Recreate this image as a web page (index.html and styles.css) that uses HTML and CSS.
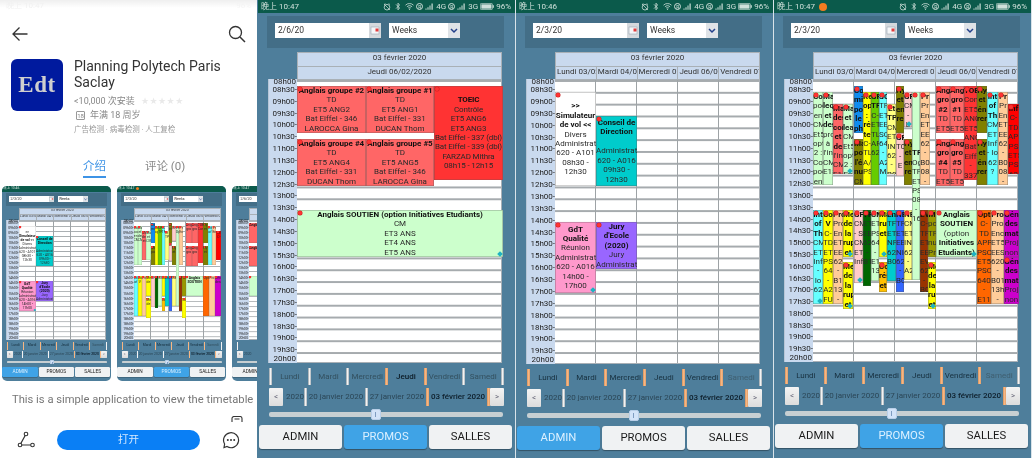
FILE: index.html
```html
<!DOCTYPE html>
<html lang="fr">
<head>
<meta charset="utf-8">
<title>Planning Polytech Paris Saclay</title>
<link rel="stylesheet" href="styles.css">
</head>
<body>
<svg class="defs" aria-hidden="true">
<symbol id="i-alarm" viewBox="0 0 8 8"><circle cx="4" cy="4.2" r="2.8" fill="none" stroke="currentColor" stroke-width=".8"/><path d="M1 1 7 7M1 1.6 2.4.6M5.6.6 7 1.6" stroke="currentColor" stroke-width=".7"/></symbol>
<symbol id="i-bt" viewBox="0 0 6 9"><path d="M1 2.4 4.6 6 3 7.8V1.2L4.6 3 1 6.6" fill="none" stroke="currentColor" stroke-width=".8"/></symbol>
<symbol id="i-wifi" viewBox="0 0 9 7"><path d="M.5 2.2a5.6 5.6 0 0 1 8 0M1.9 3.7a3.7 3.7 0 0 1 5.2 0M3.2 5a1.8 1.8 0 0 1 2.6 0" fill="none" stroke="currentColor" stroke-width=".8"/><circle cx="4.5" cy="6.2" r=".6" fill="currentColor"/></symbol>
<symbol id="i-sig" viewBox="0 0 9 7"><path d="M.5 5.6h1v1.2h-1zM2.5 4.2h1v2.6h-1zM4.5 2.6h1v4.2h-1zM6.500 .6h1.200v6.200H6.500z" fill="currentColor"/></symbol>
<symbol id="i-bat" viewBox="0 0 14 7"><rect x=".4" y=".4" width="12" height="6.200" rx="1" fill="none" stroke="currentColor" stroke-width=".7"/><rect x="1.300" y="1.300" width="10.200" height="4.400" fill="currentColor"/><rect x="12.800" y="2.200" width="1" height="2.600" fill="currentColor"/></symbol>
<symbol id="i-cal" viewBox="0 0 12 15"><rect width="12" height="15" fill="#d5d9dd"/><rect x="2" y="4" width="8" height="7" fill="#f4f6f8" stroke="#9aa7b2" stroke-width=".6"/><rect x="6.500" y="5.500" width="3" height="3" fill="#e23b3b"/></symbol>
<symbol id="i-chev" viewBox="0 0 12 15"><path d="M3 6 6 9 9 6" fill="none" stroke="#23408a" stroke-width="1.500"/></symbol>
</svg>

<main class="shot">

<section class="store">
  <div class="store-status"><span>晚上 10:47</span><span class="store-status-r">96%</span></div>
  <nav class="store-nav">
    <svg class="nav-ic" viewBox="0 0 18 18"><path d="M16.500 9H2M8.500 2.500 2 9l6.500 6.500" fill="none" stroke="#333" stroke-width="1.300"/></svg>
    <svg class="nav-ic" viewBox="0 0 18 18"><circle cx="7.500" cy="7.500" r="6" fill="none" stroke="#333" stroke-width="1.300"/><path d="M12 12l5 5" stroke="#333" stroke-width="1.500"/></svg>
  </nav>
  <div class="app">
    <div class="app-logo">Edt</div>
    <div class="app-info">
      <h1 class="app-name">Planning Polytech Paris Saclay</h1>
      <p class="app-meta">&lt;10,000 次安装<span class="stars">★★★★★</span></p>
      <p class="app-meta"><span class="age">18</span>年满 18 周岁</p>
      <p class="app-checks">广告检测 · 病毒检测 · 人工复检</p>
    </div>
  </div>
  <div class="store-tabs"><span class="store-tab on">介绍</span><span class="store-tab">评论 (0)</span></div>
  <div class="thumbs">
    <div class="thumb">
      <div class="phone mini">
        <div class="status"><span class="clock">晚上 10:46</span></div>
        <div class="toolbar"><div class="date"><span class="date-t">2/3/20</span><svg class="cal-ic"><use href="#i-cal"/></svg></div><div class="select"><span class="date-t">Weeks</span><svg class="cal-ic"><use href="#i-chev"/></svg></div></div>
        <div class="planner">
          <div class="times"><span>08h00</span><span>08h30-</span><span>09h00-</span><span>09h30-</span><span>10h00-</span><span>10h30-</span><span>11h00-</span><span>11h30-</span><span>12h00-</span><span>12h30-</span><span>13h00-</span><span>13h30-</span><span>14h00-</span><span>14h30-</span><span>15h00-</span><span>15h30-</span><span>16h00-</span><span>16h30-</span><span>17h00-</span><span>17h30-</span><span>18h00-</span><span>18h30-</span><span>19h00-</span><span>19h30-</span><span>20h00</span></div>
          <div class="cal">
            <div class="head">03 février 2020</div>
            <div class="head days"><span>Lundi 03/02</span><span>Mardi 04/02</span><span>Mercredi 05/02</span><span>Jeudi 06/02</span><span>Vendredi 07/02</span></div>
            <div class="grid five"><i></i><i></i><i></i><i></i><i></i>
              <div class="ev mid white" style="left:0;top:12px;width:41px;height:94px"><p><b>&gt;&gt; Simulateur de vol &lt;&lt;</b> Divers Administrati 620 - A101 08h30 - 12h30</p></div>
              <div class="ev mid teal" style="left:41px;top:36px;width:41px;height:70px"><p><b>Conseil de Direction</b><br><br>Administrati 620 - A016 09h30 - 12h30</p></div>
              <div class="ev mid pink mk" style="left:0;top:142px;width:41px;height:71px"><p><b>GdT Qualité</b> Réunion Administrati 620 - A016 14h00 - 17h00</p></div>
              <div class="ev purple" style="left:41px;top:142px;width:41px;height:47px"><b>Jury d'Ecole (2020)</b> Jury Administrati</div>
            </div>
          </div>
        </div>
        <div class="daybar"><i class="sep or"></i><span class="dy">Lundi</span><i class="sep or"></i><span class="dy">Mardi</span><i class="sep or"></i><span class="dy">Mercredi</span><i class="sep or"></i><span class="dy">Jeudi</span><i class="sep or"></i><span class="dy">Vendredi</span><i class="sep or"></i><span class="dy dim">Samedi</span><i class="sep"></i></div>
        <div class="weekbar"><span class="nb">&lt;</span><span class="wk first">2020</span><i class="sep"></i><span class="wk">20 janvier 2020</span><i class="sep"></i><span class="wk">27 janvier 2020</span><i class="sep or"></i><span class="wk cur">03 février 2020</span><i class="sep or"></i><span class="nb">&gt;</span></div>
        <div class="slider"><span class="knob"></span></div>
        <div class="tabs"><span class="tab on">ADMIN</span><span class="tab">PROMOS</span><span class="tab">SALLES</span></div>
      </div>
    </div>
    <div class="thumb">
      <div class="phone mini">
        <div class="status"><span class="clock">晚上 10:47</span><span class="rec"></span></div>
        <div class="toolbar"><div class="date"><span class="date-t">2/3/20</span><svg class="cal-ic"><use href="#i-cal"/></svg></div><div class="select"><span class="date-t">Weeks</span><svg class="cal-ic"><use href="#i-chev"/></svg></div></div>
        <div class="planner">
          <div class="times"><span>08h00</span><span>08h30-</span><span>09h00-</span><span>09h30-</span><span>10h00-</span><span>10h30-</span><span>11h00-</span><span>11h30-</span><span>12h00-</span><span>12h30-</span><span>13h00-</span><span>13h30-</span><span>14h00-</span><span>14h30-</span><span>15h00-</span><span>15h30-</span><span>16h00-</span><span>16h30-</span><span>17h00-</span><span>17h30-</span><span>18h00-</span><span>18h30-</span><span>19h00-</span><span>19h30-</span><span>20h00</span></div>
          <div class="cal">
            <div class="head">03 février 2020</div>
            <div class="head days"><span>Lundi 03/02</span><span>Mardi 04/02</span><span>Mercredi 05/02</span><span>Jeudi 06/02</span><span>Vendredi 07/02</span></div>
            <div class="grid five"><i></i><i></i><i></i><i></i><i></i>
              <div class="ev green" style="left:0;top:12px;width:10px;height:93px">Co pod en CM</div>
              <div class="ev green" style="left:10px;top:12px;width:10px;height:93px">Ma et des CM</div>
              <div class="ev rose" style="left:20px;top:24px;width:10px;height:70px">Ma des et</div>
              <div class="ev green" style="left:30px;top:24px;width:10px;height:70px">Ma et CM</div>
              <div class="ev blue" style="left:41px;top:6px;width:9px;height:47px">Co mi</div>
              <div class="ev olive" style="left:41px;top:59px;width:9px;height:46px">Ma po</div>
              <div class="ev yellow" style="left:50px;top:12px;width:8px;height:93px">Re op</div>
              <div class="ev lime" style="left:58px;top:12px;width:8px;height:93px">GF TF</div>
              <div class="ev aqua" style="left:66px;top:12px;width:8px;height:93px">SC TF</div>
              <div class="ev lemon" style="left:74px;top:24px;width:9px;height:70px">Et TP</div>
              <div class="ev olive" style="left:83px;top:6px;width:8px;height:47px">Hy et</div>
              <div class="ev blush" style="left:83px;top:53px;width:8px;height:43px">GF</div>
              <div class="ev blush" style="left:91px;top:12px;width:8px;height:35px">GF</div>
              <div class="ev olive" style="left:91px;top:59px;width:8px;height:46px">Hy et</div>
              <div class="ev green" style="left:99px;top:12px;width:8px;height:188px">TF Og</div>
              <div class="ev peach" style="left:107px;top:12px;width:10px;height:93px">Pr En</div>
              <div class="ev rose" style="left:123px;top:6px;width:14px;height:47px">Ang gro</div>
              <div class="ev rose" style="left:137px;top:6px;width:14px;height:47px">Ang gro</div>
              <div class="ev rose" style="left:123px;top:59px;width:14px;height:47px">Ang gro</div>
              <div class="ev rose" style="left:137px;top:59px;width:14px;height:47px">Ang gro</div>
              <div class="ev scarlet" style="left:151px;top:6px;width:13px;height:94px">TOE Con</div>
              <div class="ev olive" style="left:164px;top:6px;width:10px;height:47px">Hy et</div>
              <div class="ev olive" style="left:164px;top:59px;width:10px;height:46px">Hy et</div>
              <div class="ev aqua" style="left:174px;top:12px;width:11px;height:93px">Int of</div>
              <div class="ev peach" style="left:185px;top:12px;width:10px;height:93px">Pr En</div>
              <div class="ev red" style="left:195px;top:24px;width:11px;height:70px">Inf C-</div>
              <div class="ev aqua" style="left:0;top:130px;width:10px;height:94px">Int of</div>
              <div class="ev yellow" style="left:10px;top:130px;width:10px;height:94px">Co V</div>
              <div class="ev peach" style="left:20px;top:130px;width:10px;height:94px">Pro</div>
              <div class="ev yellow" style="left:30px;top:130px;width:10px;height:47px">Me de</div>
              <div class="ev yellow" style="left:30px;top:182px;width:10px;height:47px">Me de</div>
              <div class="ev blush" style="left:41px;top:130px;width:9px;height:73px">GF</div>
              <div class="ev forest" style="left:50px;top:130px;width:8px;height:76px">TF</div>
              <div class="ev green" style="left:58px;top:130px;width:8px;height:71px">CM</div>
              <div class="ev yellow" style="left:66px;top:130px;width:8px;height:47px">Ma</div>
              <div class="ev amber" style="left:66px;top:182px;width:8px;height:30px">Co</div>
              <div class="ev teal" style="left:74px;top:130px;width:9px;height:71px">En</div>
              <div class="ev royal" style="left:83px;top:130px;width:8px;height:82px">TF</div>
              <div class="ev lemon" style="left:91px;top:130px;width:8px;height:70px">NE</div>
              <div class="ev brown" style="left:107px;top:130px;width:8px;height:82px">EV</div>
              <div class="ev moss" style="left:115px;top:130px;width:8px;height:47px">M</div>
              <div class="ev yellow" style="left:115px;top:182px;width:8px;height:47px">Me</div>
              <div class="ev green" style="left:123px;top:130px;width:41px;height:47px"><b>Anglais SOUTIEN</b></div>
              <div class="ev orange" style="left:164px;top:130px;width:14px;height:94px">Opt</div>
              <div class="ev peach" style="left:178px;top:130px;width:13px;height:94px">Pro</div>
              <div class="ev magenta" style="left:191px;top:130px;width:15px;height:94px">Gén des</div>
            </div>
          </div>
        </div>
        <div class="daybar"><i class="sep or"></i><span class="dy">Lundi</span><i class="sep or"></i><span class="dy">Mardi</span><i class="sep or"></i><span class="dy">Mercredi</span><i class="sep or"></i><span class="dy">Jeudi</span><i class="sep or"></i><span class="dy">Vendredi</span><i class="sep or"></i><span class="dy dim">Samedi</span><i class="sep"></i></div>
        <div class="weekbar"><span class="nb">&lt;</span><span class="wk first">2020</span><i class="sep"></i><span class="wk">20 janvier 2020</span><i class="sep"></i><span class="wk">27 janvier 2020</span><i class="sep or"></i><span class="wk cur">03 février 2020</span><i class="sep or"></i><span class="nb">&gt;</span></div>
        <div class="slider"><span class="knob"></span></div>
        <div class="tabs"><span class="tab">ADMIN</span><span class="tab on">PROMOS</span><span class="tab">SALLES</span></div>
      </div>
    </div>
    <div class="thumb">
      <div class="phone mini">
        <div class="status"><span class="clock">晚上 10:47</span></div>
        <div class="toolbar"><div class="date"><span class="date-t">2/6/20</span><svg class="cal-ic"><use href="#i-cal"/></svg></div><div class="select"><span class="date-t">Weeks</span><svg class="cal-ic"><use href="#i-chev"/></svg></div></div>
        <div class="planner">
          <div class="times"><span>08h00</span><span>08h30-</span><span>09h00-</span><span>09h30-</span><span>10h00-</span><span>10h30-</span><span>11h00-</span><span>11h30-</span><span>12h00-</span><span>12h30-</span><span>13h00-</span><span>13h30-</span><span>14h00-</span><span>14h30-</span><span>15h00-</span><span>15h30-</span><span>16h00-</span><span>16h30-</span><span>17h00-</span><span>17h30-</span><span>18h00-</span><span>18h30-</span><span>19h00-</span><span>19h30-</span><span>20h00</span></div>
          <div class="cal">
            <div class="head">03 février 2020</div>
            <div class="head">Jeudi 06/02/2020</div>
            <div class="grid">
              <div class="ev rose" style="left:0;top:6px;width:69px;height:47px"><b>Anglais groupe #2</b></div>
              <div class="ev rose" style="left:0;top:59px;width:69px;height:47px"><b>Anglais groupe #4</b></div>
              <div class="ev green" style="left:0;top:130px;width:206px;height:47px"><b>Anglais SOUTIEN</b></div>
            </div>
          </div>
        </div>
        <div class="daybar"><i class="sep"></i><span class="dy dim">Lundi</span><i class="sep"></i></div>
        <div class="weekbar"><span class="nb">&lt;</span><span class="wk first">2020</span></div>
        <div class="slider"></div>
        <div class="tabs"><span class="tab">ADMIN</span><span class="tab on">PROMOS</span><span class="tab">SALLES</span></div>
      </div>
    </div>
  </div>
  <p class="desc">This is a simple application to view the timetable</p>
  <div class="peek"><svg class="peek-ic" viewBox="0 0 12 6"><path d="M1 6V2.500a2 2 0 0 1 2-2h6a2 2 0 0 1 2 2V6M3.500 3h5" fill="none" stroke="#333" stroke-width="1.100"/></svg></div>
  <div class="actions">
    <svg class="act-ic" viewBox="0 0 18 18"><path d="M9 3 3 14h13" fill="none" stroke="#333" stroke-width="1.200"/><circle cx="9" cy="3" r="1.800" fill="#fff" stroke="#333" stroke-width="1.100"/><circle cx="3" cy="14" r="1.800" fill="#fff" stroke="#333" stroke-width="1.100"/><circle cx="15.500" cy="14" r="1.800" fill="#fff" stroke="#333" stroke-width="1.100"/></svg>
    <span class="open">打开</span>
    <svg class="act-ic" viewBox="0 0 18 18"><path d="M5 15.500A7.500 7.500 0 1 0 2.600 13L2 16.500z" fill="none" stroke="#333" stroke-width="1.200"/><circle cx="5.800" cy="9" r="1" fill="#333"/><circle cx="9" cy="9" r="1" fill="#333"/><circle cx="12.200" cy="9" r="1" fill="#333"/></svg>
  </div>
</section>

<section class="phone first-phone">
  <div class="status"><span class="clock">晚上 10:47</span><span class="status-r"><svg class="s-a"><use href="#i-alarm"/></svg><svg class="s-b"><use href="#i-bt"/></svg><svg class="s-w"><use href="#i-wifi"/></svg><span class="r">R</span><svg class="s-w"><use href="#i-sig"/></svg><span>4G</span><span class="r">R</span><svg class="s-w"><use href="#i-sig"/></svg><span>3G</span><svg class="s-t"><use href="#i-bat"/></svg><span>96%</span></span></div>
  <div class="toolbar"><div class="date"><span class="date-t">2/6/20</span><svg class="cal-ic"><use href="#i-cal"/></svg></div><div class="select"><span class="date-t">Weeks</span><svg class="cal-ic"><use href="#i-chev"/></svg></div></div>
  <div class="planner">
    <div class="times"><span>08h00</span><span>08h30-</span><span>09h00-</span><span>09h30-</span><span>10h00-</span><span>10h30-</span><span>11h00-</span><span>11h30-</span><span>12h00-</span><span>12h30-</span><span>13h00-</span><span>13h30-</span><span>14h00-</span><span>14h30-</span><span>15h00-</span><span>15h30-</span><span>16h00-</span><span>16h30-</span><span>17h00-</span><span>17h30-</span><span>18h00-</span><span>18h30-</span><span>19h00-</span><span>19h30-</span><span>20h00</span></div>
    <div class="cal">
      <div class="head">03 février 2020</div>
      <div class="head">Jeudi 06/02/2020</div>
      <div class="grid">
        <div class="ev rose" style="left:0;top:6px;width:69px;height:47px"><b>Anglais groupe #2</b><br>TD<br>ET5 ANG2<br>Bat Eiffel - 346<br>LAROCCA Gina</div>
        <div class="ev rose" style="left:69px;top:6px;width:68px;height:47px"><b>Anglais groupe #1</b><br>TD<br>ET5 ANG1<br>Bat Eiffel - 331<br>DUCAN Thom</div>
        <div class="ev mid scarlet tight" style="left:137px;top:6px;width:69px;height:94px"><p><b>TOEIC</b><br>Contrôle<br>ET5 ANG6<br>ET5 ANG3<br>Bat Eiffel - 337 (dbl)<br>Bat Eiffel - 339 (dbl)<br>FARZAD Mithra<br>08h15 - 12h15</p></div>
        <div class="ev rose" style="left:0;top:59px;width:69px;height:47px"><b>Anglais groupe #4</b><br>TD<br>ET5 ANG4<br>Bat Eiffel - 331<br>DUCAN Thom</div>
        <div class="ev rose" style="left:69px;top:59px;width:68px;height:47px"><b>Anglais groupe #5</b><br>TD<br>ET5 ANG5<br>Bat Eiffel - 346<br>LAROCCA Gina</div>
        <div class="ev green mk" style="left:0;top:130px;width:206px;height:47px"><b>Anglais SOUTIEN (option Initiatives Etudiants)</b><br>CM<br>ET3 ANS<br>ET4 ANS<br>ET5 ANS</div>
      </div>
    </div>
  </div>
  <div class="daybar"><i class="sep"></i><span class="dy dim">Lundi</span><i class="sep"></i><span class="dy dim">Mardi</span><i class="sep"></i><span class="dy dim">Mercredi</span><i class="sep or"></i><span class="dy cur">Jeudi</span><i class="sep or"></i><span class="dy dim">Vendredi</span><i class="sep"></i><span class="dy dim">Samedi</span><i class="sep"></i></div>
  <div class="weekbar"><span class="nb">&lt;</span><span class="wk first">2020</span><i class="sep"></i><span class="wk">20 janvier 2020</span><i class="sep"></i><span class="wk">27 janvier 2020</span><i class="sep or"></i><span class="wk cur">03 février 2020</span><i class="sep or"></i><span class="nb">&gt;</span></div>
  <div class="slider"><span class="knob"></span></div>
  <div class="tabs"><span class="tab">ADMIN</span><span class="tab on">PROMOS</span><span class="tab">SALLES</span></div>
</section>

<section class="phone tall">
  <div class="status"><span class="clock">晚上 10:46</span><span class="status-r"><svg class="s-a"><use href="#i-alarm"/></svg><svg class="s-b"><use href="#i-bt"/></svg><svg class="s-w"><use href="#i-wifi"/></svg><span class="r">R</span><svg class="s-w"><use href="#i-sig"/></svg><span>4G</span><span class="r">R</span><svg class="s-w"><use href="#i-sig"/></svg><span>3G</span><svg class="s-t"><use href="#i-bat"/></svg><span>96%</span></span></div>
  <div class="toolbar"><div class="date"><span class="date-t">2/3/20</span><svg class="cal-ic"><use href="#i-cal"/></svg></div><div class="select"><span class="date-t">Weeks</span><svg class="cal-ic"><use href="#i-chev"/></svg></div></div>
  <div class="planner">
    <div class="times"><span>08h00</span><span>08h30-</span><span>09h00-</span><span>09h30-</span><span>10h00-</span><span>10h30-</span><span>11h00-</span><span>11h30-</span><span>12h00-</span><span>12h30-</span><span>13h00-</span><span>13h30-</span><span>14h00-</span><span>14h30-</span><span>15h00-</span><span>15h30-</span><span>16h00-</span><span>16h30-</span><span>17h00-</span><span>17h30-</span><span>18h00-</span><span>18h30-</span><span>19h00-</span><span>19h30-</span><span>20h00</span></div>
    <div class="cal">
      <div class="head">03 février 2020</div>
      <div class="head days"><span>Lundi 03/02</span><span>Mardi 04/02</span><span>Mercredi 05/02</span><span>Jeudi 06/02</span><span>Vendredi 07/02</span></div>
      <div class="grid five"><i></i><i></i><i></i><i></i><i></i>
        <div class="ev mid white" style="left:0;top:12px;width:41px;height:94px"><p><b>&gt;&gt; Simulateur de vol &lt;&lt;</b> Divers Administrati 620 - A101 08h30 - 12h30</p></div>
        <div class="ev mid teal" style="left:41px;top:36px;width:41px;height:70px"><p><b>Conseil de Direction</b><br><br>Administrati 620 - A016 09h30 - 12h30</p></div>
        <div class="ev mid pink mk" style="left:0;top:142px;width:41px;height:71px"><p><b>GdT Qualité</b> Réunion Administrati 620 - A016 14h00 - 17h00</p></div>
        <div class="ev purple" style="left:41px;top:142px;width:41px;height:47px"><b>Jury d'Ecole (2020)</b> Jury Administrati</div>
      </div>
    </div>
  </div>
  <div class="daybar"><i class="sep or"></i><span class="dy">Lundi</span><i class="sep or"></i><span class="dy">Mardi</span><i class="sep or"></i><span class="dy">Mercredi</span><i class="sep or"></i><span class="dy">Jeudi</span><i class="sep or"></i><span class="dy">Vendredi</span><i class="sep or"></i><span class="dy dim">Samedi</span><i class="sep"></i></div>
  <div class="weekbar"><span class="nb">&lt;</span><span class="wk first">2020</span><i class="sep"></i><span class="wk">20 janvier 2020</span><i class="sep"></i><span class="wk">27 janvier 2020</span><i class="sep or"></i><span class="wk cur">03 février 2020</span><i class="sep or"></i><span class="nb">&gt;</span></div>
  <div class="slider"><span class="knob"></span></div>
  <div class="tabs"><span class="tab on">ADMIN</span><span class="tab">PROMOS</span><span class="tab">SALLES</span></div>
</section>

<section class="phone short">
  <div class="status"><span class="clock">晚上 10:47</span><span class="rec"></span><span class="status-r"><svg class="s-a"><use href="#i-alarm"/></svg><svg class="s-b"><use href="#i-bt"/></svg><svg class="s-w"><use href="#i-wifi"/></svg><span class="r">R</span><svg class="s-w"><use href="#i-sig"/></svg><span>4G</span><span class="r">R</span><svg class="s-w"><use href="#i-sig"/></svg><span>3G</span><svg class="s-t"><use href="#i-bat"/></svg><span>96%</span></span></div>
  <div class="toolbar"><div class="date"><span class="date-t">2/3/20</span><svg class="cal-ic"><use href="#i-cal"/></svg></div><div class="select"><span class="date-t">Weeks</span><svg class="cal-ic"><use href="#i-chev"/></svg></div></div>
  <div class="planner">
    <div class="times"><span>08h00</span><span>08h30-</span><span>09h00-</span><span>09h30-</span><span>10h00-</span><span>10h30-</span><span>11h00-</span><span>11h30-</span><span>12h00-</span><span>12h30-</span><span>13h00-</span><span>13h30-</span><span>14h00-</span><span>14h30-</span><span>15h00-</span><span>15h30-</span><span>16h00-</span><span>16h30-</span><span>17h00-</span><span>17h30-</span><span>18h00-</span><span>18h30-</span><span>19h00-</span><span>19h30-</span><span>20h00</span></div>
    <div class="cal">
      <div class="head">03 février 2020</div>
      <div class="head days"><span>Lundi 03/02</span><span>Mardi 04/02</span><span>Mercredi 05/02</span><span>Jeudi 06/02</span><span>Vendredi 07/02</span></div>
      <div class="grid five"><i></i><i></i><i></i><i></i><i></i>
        <div class="ev green" style="left:0;top:12px;width:10px;height:93px"><b>Co</b> pod en CM Et5 opt 2 : Col pod en</div>
        <div class="ev green" style="left:10px;top:12px;width:10px;height:93px"><b>Ma leq et des</b> pro à l'in CM E15</div>
        <div class="ev rose" style="left:20px;top:24px;width:10px;height:70px"><b>Ma des cor et de</b> l'in CM E15</div>
        <div class="ev green mk" style="left:30px;top:24px;width:10px;height:70px"><b>Ma et lea</b> CM Et5 opt 2 : En</div>
        <div class="ev blue" style="left:41px;top:6px;width:9px;height:47px"><b>Co mi pos le ph</b></div>
        <div class="ev olive" style="left:41px;top:59px;width:9px;height:46px"><b>Ma po l'é nu</b> CM</div>
        <div class="ev yellow" style="left:50px;top:12px;width:8px;height:93px"><b>Re op : ré te</b> C- TL A/ PS</div>
        <div class="ev lime" style="left:58px;top:12px;width:8px;height:93px"><b>GF TF</b> C- ET TL AF 62</div>
        <div class="ev aqua" style="left:66px;top:12px;width:8px;height:93px"><b>SC</b> TF ET EE SC 64 - A2 M</div>
        <div class="ev lemon" style="left:74px;top:24px;width:9px;height:70px"><b>Et TP</b> CM ET IN 62 - B0</div>
        <div class="ev olive" style="left:83px;top:6px;width:8px;height:47px"><b>Hy et en re</b></div>
        <div class="ev blush" style="left:83px;top:53px;width:8px;height:43px"><b>GF</b> T0 - E</div>
        <div class="ev blush mk" style="left:91px;top:12px;width:8px;height:35px"><b>GF</b> CM - L</div>
        <div class="ev olive" style="left:91px;top:59px;width:8px;height:46px"><b>Hy et en re</b></div>
        <div class="ev mid green" style="left:99px;top:12px;width:8px;height:188px"><p><b>TF</b> Og TF ET PS 08 - 16</p></div>
        <div class="ev peach" style="left:107px;top:12px;width:10px;height:93px"><b>Pr</b> Pr En ET EE 62 - B0 08 -</div>
        <div class="ev rose" style="left:123px;top:6px;width:14px;height:47px"><b>Ang gro #2</b> TD ET5</div>
        <div class="ev rose" style="left:137px;top:6px;width:14px;height:47px"><b>Ang gro #1</b> TD ET5</div>
        <div class="ev rose" style="left:123px;top:59px;width:14px;height:47px"><b>Ang gro #4</b> TD ET5</div>
        <div class="ev rose" style="left:137px;top:59px;width:14px;height:47px"><b>Ang gro #5</b> TD ET5</div>
        <div class="ev scarlet" style="left:151px;top:6px;width:13px;height:94px"><b>TOE</b> Con ET5 AN0 ET5 AN0 Bat Eiff - 337</div>
        <div class="ev olive" style="left:164px;top:6px;width:10px;height:47px"><b>Hy et én rer</b></div>
        <div class="ev olive" style="left:164px;top:59px;width:10px;height:46px"><b>Hy et én rer</b></div>
        <div class="ev aqua" style="left:174px;top:12px;width:11px;height:93px"><b>Int of Th</b> CM ET Inf - Io 62 ?</div>
        <div class="ev peach" style="left:185px;top:12px;width:10px;height:93px"><b>Pr</b> Pr En ET EE 62 - B0 08 -</div>
        <div class="ev red" style="left:195px;top:24px;width:11px;height:70px"><b>Inf</b> C- TD API PS ET5 PS 62</div>
        <div class="ev aqua mk" style="left:0;top:130px;width:10px;height:94px"><b>Int of Th</b> CM ET Inf - Io 62</div>
        <div class="ev yellow" style="left:10px;top:130px;width:10px;height:94px"><b>Co V</b> C- TD ET PS 64 - A2 FU</div>
        <div class="ev peach" style="left:20px;top:130px;width:10px;height:94px"><b>Pro</b> Pro En ET EE 62 - B1 13 -</div>
        <div class="ev yellow mk" style="left:30px;top:130px;width:10px;height:47px"><b>Me de la rup et</b></div>
        <div class="ev yellow mk" style="left:30px;top:182px;width:10px;height:47px"><b>Me de la rup et</b></div>
        <div class="ev blush mk" style="left:41px;top:130px;width:9px;height:73px"><b>GF</b> CM - S CM ET Inf</div>
        <div class="ev forest" style="left:50px;top:130px;width:8px;height:76px"><b>TF</b> ET EE 62 - B1</div>
        <div class="ev green" style="left:58px;top:130px;width:8px;height:71px"><b>CM</b> ET PS 64 - E1 13</div>
        <div class="ev yellow mk" style="left:66px;top:130px;width:8px;height:47px"><b>Ma ru et</b></div>
        <div class="ev amber" style="left:66px;top:182px;width:8px;height:30px"><b>Co rés et</b></div>
        <div class="ev teal" style="left:74px;top:130px;width:9px;height:71px"><b>En</b> TF ET NF 62 B0</div>
        <div class="ev royal" style="left:83px;top:130px;width:8px;height:82px"><b>NE</b> TF ET EE NI 62 - B0</div>
        <div class="ev lemon" style="left:91px;top:130px;width:8px;height:70px"><b>NE</b> CM ET IN 62 - A2</div>
        <div class="ev brown" style="left:107px;top:130px;width:8px;height:82px"><b>EV</b> C- TF ET EE EV 62 - B0</div>
        <div class="ev moss" style="left:115px;top:130px;width:8px;height:47px"><b>M</b> po TF nu Pr</div>
        <div class="ev yellow mk" style="left:115px;top:182px;width:8px;height:47px"><b>Me de la rup et</b></div>
        <div class="ev green mk" style="left:123px;top:130px;width:41px;height:47px"><b>Anglais SOUTIEN</b> (option <b>Initiatives Etudiants)</b></div>
        <div class="ev orange" style="left:164px;top:130px;width:14px;height:94px"><b>Opt</b> C- TD APP PSC ET5 PSC 640 - E11</div>
        <div class="ev peach" style="left:178px;top:130px;width:13px;height:94px"><b>Pro</b> Pro Enc ET5 EES 620 - B01 13h -</div>
        <div class="ev magenta" style="left:191px;top:130px;width:15px;height:47px"><b>Gén des mat</b> Proj non</div>
        <div class="ev magenta" style="left:191px;top:177px;width:15px;height:47px"><b>Gén des mat</b> Proj non</div>
      </div>
    </div>
  </div>
  <div class="daybar"><i class="sep or"></i><span class="dy">Lundi</span><i class="sep or"></i><span class="dy">Mardi</span><i class="sep or"></i><span class="dy">Mercredi</span><i class="sep or"></i><span class="dy">Jeudi</span><i class="sep or"></i><span class="dy">Vendredi</span><i class="sep or"></i><span class="dy dim">Samedi</span><i class="sep"></i></div>
  <div class="weekbar"><span class="nb">&lt;</span><span class="wk first">2020</span><i class="sep"></i><span class="wk">20 janvier 2020</span><i class="sep"></i><span class="wk">27 janvier 2020</span><i class="sep or"></i><span class="wk cur">03 février 2020</span><i class="sep or"></i><span class="nb">&gt;</span></div>
  <div class="slider"><span class="knob"></span></div>
  <div class="tabs"><span class="tab">ADMIN</span><span class="tab on">PROMOS</span><span class="tab">SALLES</span></div>
</section>

</main>
</body>
</html>
```
FILE: styles.css
```css
* { box-sizing: border-box; }
html, body { margin: 0; padding: 0; background: #fff; }
body { width: 1032px; height: 458px; overflow: hidden; font-family: Roboto, "Noto Sans CJK SC", sans-serif; }
p, h1 { margin: 0; font-weight: 400; }
.defs { display: none; }
.shot { display: flex; width: 1032px; height: 458px; overflow: hidden; filter: blur(.35px); }

/* app store panel */
.store { flex: none; width: 257px; height: 458px; background: #fff; overflow: hidden; display: flex; flex-direction: column; }
.store-status { flex: none; height: 13px; padding: 0 6px; display: flex; justify-content: space-between; font-size: 8px; line-height: 11px; color: #f1f1f1; background: linear-gradient(#efefef, #fff 60%); }
.store-status-r { color: #f4f4f4; }
.store-nav { flex: none; height: 27px; margin-top: 7px; padding: 0 11px 0 11px; display: flex; justify-content: space-between; align-items: center; }
.nav-ic { width: 18px; height: 18px; }
.app { flex: none; height: 52px; margin-top: 12px; padding-left: 11px; display: flex; gap: 11px; }
.app-logo { width: 52px; height: 52px; border-radius: 6px; background: #001a9e; color: #cfcfcf; font: 700 23px/52px "Liberation Serif", serif; letter-spacing: .5px; text-align: center; }
.app-info { width: 170px; }
.app-name { font-size: 14px; line-height: 15.500px; color: #333; margin-top: 0; }
.app-meta { font-size: 9px; line-height: 13px; color: #888; margin-top: 5px; display: flex; align-items: center; white-space: nowrap; }
.app-meta + .app-meta { margin-top: 1px; }
.stars { margin-left: 6px; color: #e9e9e9; font: 9px/1 "DejaVu Sans", sans-serif; letter-spacing: .5px; }
.age { width: 9px; height: 9px; margin: 0 5px 0 2px; border: 1px solid #999; border-radius: 1px; font-size: 6px; line-height: 7px; text-align: center; }
.app-checks { font-size: 7.500px; line-height: 12px; color: #999; margin-top: 2px; }
.store-tabs { flex: none; margin-top: 44px; height: 23px; display: flex; padding-left: 83px; gap: 39px; font-size: 11.500px; line-height: 22px; color: #888; }
.store-tab.on { color: #3d93e6; height: 23px; border-bottom: 2px solid #3d93e6; }
.thumbs { flex: none; height: 195px; margin-top: 8px; padding-left: 2px; display: flex; gap: 6px; overflow: hidden; }
.thumb { flex: none; width: 109px; height: 195px; border-radius: 5px; overflow: hidden; }
.desc { flex: none; margin-top: 12px; padding-left: 12px; font-size: 11.200px; line-height: 14px; color: #777; white-space: nowrap; }
.peek { flex: none; height: 15px; display: flex; justify-content: flex-end; align-items: flex-end; padding-right: 14px; }
.peek-ic { width: 12px; height: 6px; }
.actions { flex: none; height: 36px; background: #fff; display: flex; align-items: center; padding: 0 17px; gap: 22px; }
.act-ic { flex: none; width: 18px; height: 18px; }
.open { flex: none; width: 143px; height: 20px; border-radius: 10px; background: #0a7ff5; color: #d5e9ff; font-size: 10.500px; line-height: 20px; text-align: center; }

/* phone screens */
.phone { flex: none; width: 258px; height: 458px; background: #4e7e9b; border-right: 1px solid #d9e3e9; display: flex; flex-direction: column; overflow: hidden; color: #222; }
.first-phone { width: 259px; padding-left: 1px; }
.mini { zoom: .425; border-right: 0; }
.status { flex: none; height: 13px; padding: 0 3px; background: #0b5a4b; color: #cfe0da; display: flex; align-items: center; font-size: 8px; line-height: 13px; }
.clock { white-space: nowrap; }
.rec { width: 8px; height: 8px; margin-left: 4px; border-radius: 50%; background: #f47c20; }
.status-r { margin-left: auto; display: flex; align-items: center; gap: 2px; padding-right: 1px; }
.s-a { width: 8px; height: 8px; }
.s-b { width: 6px; height: 9px; margin: 0 2px; }
.s-w { width: 9px; height: 7px; }
.s-t { width: 14px; height: 7px; }
.r { width: 7px; height: 7px; border: .7px solid currentColor; border-radius: 50%; font-size: 5px; line-height: 6px; text-align: center; }
.toolbar { flex: none; height: 32px; margin: 3px 11px 4px 9px; background: #436e87; display: flex; padding: 7px 0 0 8px; gap: 8px; }
.date, .select { height: 15px; background: #fff; display: flex; justify-content: space-between; }
.date { width: 106px; }
.select { width: 71px; }
.date-t { font-size: 8.500px; line-height: 15px; padding-left: 3px; color: #333; }
.cal-ic { width: 12px; height: 15px; background: #dfe3e7; }
.planner { flex: none; height: 311px; display: flex; padding-left: 10px; padding-right: 13px; }
.tall .planner { height: 312px; }
.short .planner { height: 310px; }
.times { flex: none; width: 29px; margin-top: 27px; background: #c9d9ee; display: flex; flex-direction: column; font-size: 8px; text-align: right; color: #222; border-left: 1px solid #b7c6d6; }
.times span { flex: 1 1 11.83px; height: 11.830px; line-height: 9px; white-space: nowrap; }
.times span:first-child { flex: none; height: 6px; line-height: 6px; padding-right: 1px; }
.times span:last-child { flex: none; height: 6px; line-height: 4px; padding-right: 1px; }
.cal { flex: 1; min-width: 0; display: flex; flex-direction: column; }
.head { flex: none; height: 13.500px; background: #c9d9ee; border: 1px solid #a9b0b6; border-bottom: 0; font-size: 8px; line-height: 9px; text-align: center; color: #333; overflow: hidden; }
.days { display: flex; padding: 0; }
.days span { flex: 1; min-width: 0; white-space: nowrap; overflow: hidden; text-align: left; padding-left: 1px; border-right: 1px solid #a9b0b6; }
.days span:last-child { border-right: 0; }
.grid { flex: 1; position: relative; display: flex; background-color: #fff; background-image: linear-gradient(#a6abae 1.5px, transparent 1.5px); background-size: 100% 11.830px; border: 1px solid #a9b0b6; border-width: 1px 1px 1px 0; }
.grid > i { flex: 1; border-right: 1px solid #9ea3a6; }
.grid > i:last-of-type { border-right: 0; }
.ev { position: absolute; overflow: hidden; font-size: 8px; line-height: 9.400px; text-align: center; color: #2a2a2a; box-shadow: inset 0 0 0 .6px rgba(90, 90, 90, .55); }
.ev b { color: #111; }
.ev p { margin: 0; width: 100%; }
.ev.mid { display: flex; align-items: safe center; }
.tight { letter-spacing: -.15px; }
.ev::before { content: ""; position: absolute; left: 1px; top: 1px; width: 4px; height: 4px; border-radius: 50%; background: #f33; box-shadow: 0 0 0 .5px #c22; }
.mk::after { content: ""; position: absolute; right: 1px; bottom: 1px; width: 4px; height: 4px; transform: rotate(45deg); background: #1fb3c2; }
.white { background: #fff; }
.rose { background: #ff6666; }
.scarlet { background: #ff3333; }
.red { background: #ff0000; }
.green { background: #ccffcc; }
.teal { background: #00cccc; }
.pink { background: #ff99cc; }
.purple { background: #9966ff; }
.blue { background: #0f8cf0; }
.olive { background: #808000; }
.yellow { background: #ffff00; }
.lime { background: #66cc00; }
.aqua { background: #66ffff; }
.lemon { background: #ffff80; }
.blush { background: #ffcccc; }
.peach { background: #ffcc99; }
.forest { background: #006600; }
.amber { background: #ffc000; }
.royal { background: #3366ff; }
.brown { background: #993300; }
.moss { background: #999900; }
.orange { background: #ff6600; }
.magenta { background: #cc00cc; }

.daybar { flex: none; height: 17px; margin-top: 5px; padding: 0 11px; display: flex; align-items: stretch; }
.sep { flex: none; width: 3px; background: linear-gradient(90deg, #8f9aa1, #f3f3f3 50%, #aab2b8); }
.sep.or { background: linear-gradient(90deg, #d9935c, #f7b682 50%, #e1a06c); }
.dy { flex: 1; min-width: 0; text-align: center; font-size: 8px; line-height: 17px; color: #17303f; white-space: nowrap; overflow: hidden; }
.dy.dim { color: #33505f; }
.dy.cur { color: #0b1a24; font-weight: 500; }
.tall .dy.dim, .short .dy.dim { color: #3f5f70; }
.weekbar { flex: none; height: 18px; margin-top: 3px; padding: 0 11px; display: flex; }
.nb { flex: none; width: 14px; background: linear-gradient(#f4f4f4, #dcdcdc); color: #667; font-size: 8px; line-height: 17px; text-align: center; border-radius: 1px; }
.wk { flex: 1; min-width: 0; text-align: center; font-size: 8px; line-height: 18px; color: #2b4656; white-space: nowrap; overflow: hidden; }
.wk.first { flex: none; width: 21px; text-align: right; }
.wk.cur { color: #0d1e2a; font-weight: 500; }
.slider { flex: none; height: 5px; margin: 6px 12px 0 11px; background: #c7cfd2; border-radius: 2px; position: relative; }
.knob { position: absolute; left: 102px; top: -3px; width: 10px; height: 11px; border-radius: 2px; background: #d3e3f8; border: 1px solid #b9cfe8; }
.knob::after { content: ""; position: absolute; left: 3px; top: 2px; width: 1px; height: 5px; background: #7f9cc0; }
.tabs { flex: none; height: 24px; margin-top: 8px; padding: 0 3px 0 1px; display: flex; gap: 2px; }
.tab { flex: 1; border-radius: 3px; background: #f0f2f3; color: #1a1a1a; font-size: 11.300px; line-height: 24px; text-align: center; box-shadow: 0 1px 1px rgba(0, 0, 0, .35); }
.tab.on { background: #3fa3e6; color: #dcf0ff; }
```
